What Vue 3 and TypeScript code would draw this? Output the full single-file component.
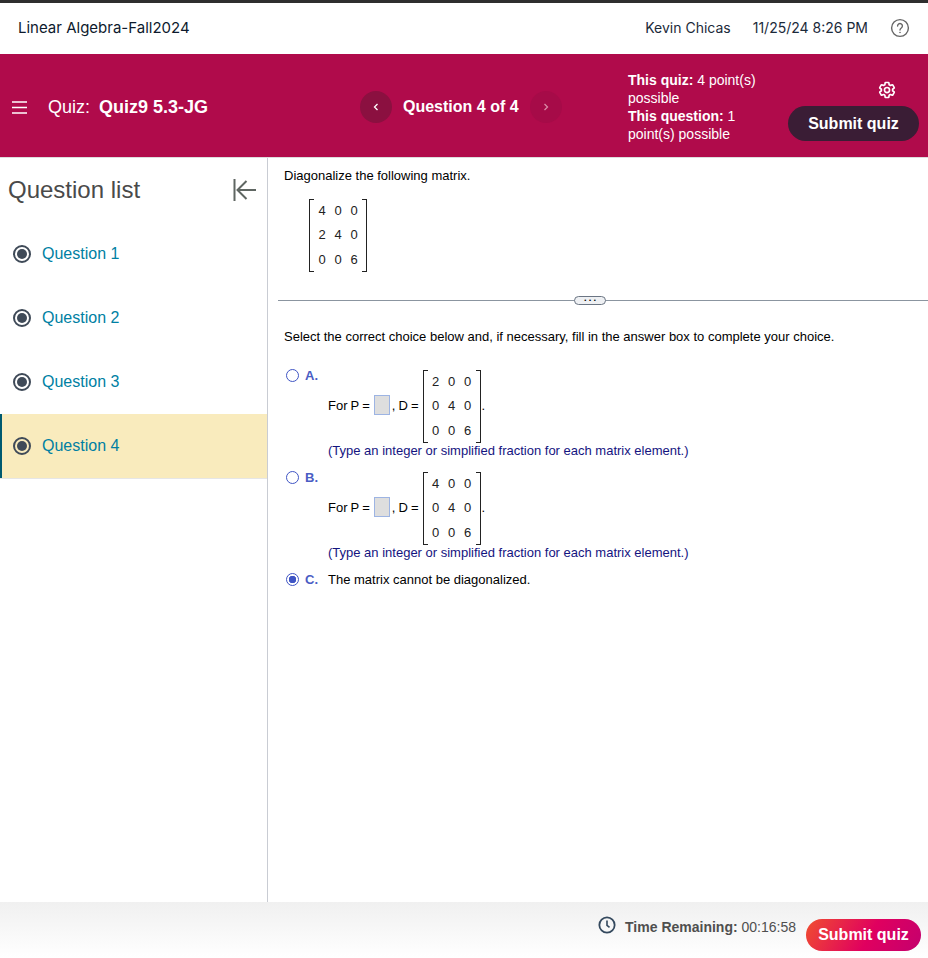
<script setup lang="ts">
interface Choice {
  letter: string
  rows?: number[][]
  text?: string
  selected?: boolean
}

const questions = ['Question 1', 'Question 2', 'Question 3', 'Question 4']
const stem = [[4, 0, 0], [2, 4, 0], [0, 0, 6]]
const note = '(Type an integer or simplified fraction for each matrix element.)'
const choices: Choice[] = [
  { letter: 'A.', rows: [[2, 0, 0], [0, 4, 0], [0, 0, 6]] },
  { letter: 'B.', rows: [[4, 0, 0], [0, 4, 0], [0, 0, 6]] },
  { letter: 'C.', text: 'The matrix cannot be diagonalized.', selected: true }
]
</script>

<template>
  <div class="page">
    <header class="topbar">
      <span class="course">Linear Algebra-Fall2024</span>
      <span class="user">Kevin Chicas</span>
      <span class="clock">11/25/24 8:26 PM</span>
      <svg class="help" width="20" height="20" viewBox="0 0 20 20" fill="none" stroke="#666" stroke-width="1.4">
        <circle cx="10" cy="10" r="8.4" />
        <path d="M7.6 8a2.4 2.4 0 1 1 3.7 2c-.9.6-1.3 1-1.3 2" stroke-linecap="round" />
        <circle cx="10" cy="14.4" r=".5" fill="#666" stroke-width=".6" />
      </svg>
    </header>

    <section class="quizbar">
      <svg class="menu" width="16" height="13" viewBox="0 0 16 13" stroke="#fff" stroke-width="1.5">
        <path d="M0 1h15M0 6.5h15M0 12h15" />
      </svg>
      <div class="quiz-title"><span>Quiz:</span><b>Quiz9 5.3-JG</b></div>
      <div class="pager">
        <button class="round prev">
          <svg width="6" height="8" viewBox="0 0 6 8" fill="none" stroke="#fff" stroke-width="1.3"><path d="M4.5 1 1.5 4l3 3" /></svg>
        </button>
        <b>Question 4 of 4</b>
        <button class="round next">
          <svg width="6" height="8" viewBox="0 0 6 8" fill="none" stroke="#d98aa5" stroke-width="1.3"><path d="M1.5 1l3 3-3 3" /></svg>
        </button>
      </div>
      <div class="points">
        <div><b>This quiz:</b> 4 point(s) possible</div>
        <div><b>This question:</b> 1 point(s) possible</div>
      </div>
      <div class="actions">
        <svg class="gear" width="18" height="18" viewBox="0 0 24 24" fill="none" stroke="#fff" stroke-width="2.2" stroke-linejoin="round">
          <circle cx="12" cy="12" r="3.4" />
          <path d="M19.43 12.98c.04-.32.07-.64.07-.98 0-.34-.03-.66-.07-.98l2.11-1.65c.19-.15.24-.42.12-.64l-2-3.46c-.09-.16-.26-.25-.44-.25-.06 0-.12.01-.17.03l-2.49 1c-.52-.4-1.08-.73-1.69-.98l-.38-2.65C14.46 2.18 14.25 2 14 2h-4c-.25 0-.46.18-.49.42l-.38 2.65c-.61.25-1.17.59-1.69.98l-2.49-1c-.06-.02-.12-.03-.18-.03-.17 0-.34.09-.43.25l-2 3.46c-.13.22-.07.49.12.64l2.11 1.65c-.04.32-.07.65-.07.98 0 .33.03.66.07.98l-2.11 1.65c-.19.15-.24.42-.12.64l2 3.46c.09.16.26.25.44.25.06 0 .12-.01.17-.03l2.49-1c.52.4 1.08.73 1.69.98l.38 2.65c.03.24.24.42.49.42h4c.25 0 .46-.18.49-.42l.38-2.65c.61-.25 1.17-.59 1.69-.98l2.49 1c.06.02.12.03.18.03.17 0 .34-.09.43-.25l2-3.46c.12-.22.07-.49-.12-.64l-2.11-1.65z" />
        </svg>
        <button class="submit-dark">Submit quiz</button>
      </div>
    </section>

    <main class="body">
      <aside class="sidebar">
        <div class="side-head">
          <h2>Question list</h2>
          <svg width="24" height="22" viewBox="0 0 24 22" fill="none" stroke="#5f6662" stroke-width="2">
            <path d="M1.5 0v22M23 11H4.5M13.5 2l-9 9 9 9" />
          </svg>
        </div>
        <div
          v-for="(q, i) in questions"
          :key="q"
          class="q-row"
          :class="{ 'q-row--active': i === 3 }"
        >
          <span class="q-dot"><i></i></span>
          <span class="q-label">{{ q }}</span>
        </div>
      </aside>

      <div class="content">
        <p class="stem">Diagonalize the following matrix.</p>
        <div class="stem-matrix matrix">
          <template v-for="(row, r) in stem" :key="r">
            <span v-for="(n, c) in row" :key="c">{{ n }}</span>
          </template>
        </div>

        <div class="divider">
          <span class="dots">• • •</span>
        </div>

        <p class="prompt">Select the correct choice below and, if necessary, fill in the answer box to complete your choice.</p>

        <div class="choices">
          <div v-for="ch in choices" :key="ch.letter" class="choice">
            <span class="radio" :class="{ 'radio--on': ch.selected }"></span>
            <span class="letter">{{ ch.letter }}</span>
            <span v-if="ch.text" class="choice-text">{{ ch.text }}</span>
            <div v-else class="choice-body">
              <div class="equation">
                <span class="eq-part">For P =</span>
                <span class="answer-box eq-part"></span>
                <span class="comma eq-part">, D =</span>
                <div class="matrix">
                  <template v-for="(row, r) in ch.rows" :key="r">
                    <span v-for="(n, c) in row" :key="c">{{ n }}</span>
                  </template>
                </div>
                <span class="period eq-part">.</span>
              </div>
              <div class="note">{{ note }}</div>
            </div>
          </div>
        </div>
      </div>
    </main>

    <footer class="footer">
      <svg class="timer" width="18" height="18" viewBox="0 0 20 20" fill="none" stroke="#34495e" stroke-width="2">
        <circle cx="10" cy="10" r="8.5" />
        <path d="M10 5V10.5l2.8 2.2" stroke-width="1.8" />
      </svg>
      <span class="time"><b>Time Remaining:</b> 00:16:58</span>
      <button class="submit-bright">Submit quiz</button>
    </footer>
  </div>
</template>

<style>
html, body {
  margin: 0;
  background: #fff;
}
</style>

<style scoped>
.page {
  display: flex;
  flex-direction: column;
  height: 958px;
  overflow: hidden;
  font-family: "Liberation Sans", Arial, sans-serif;
  color: #111;
}
button {
  border: 0;
  padding: 0;
  font-family: inherit;
}

.topbar {
  flex: none;
  display: flex;
  align-items: center;
  box-sizing: border-box;
  height: 54px;
  padding: 0 18px 2px 18px;
  border-top: 3px solid #2e2e2e;
  font-family: Inter, sans-serif;
  font-size: 14px;
  color: #1b2a3a;
}
.course {
  flex: 1;
  font-size: 15px;
  color: #0d1a2d;
}
.user {
  margin-right: 22px;
}
.clock {
  margin-right: 22px;
}

.quizbar {
  flex: none;
  display: flex;
  align-items: center;
  box-sizing: border-box;
  height: 104px;
  padding: 3px 9px 0 12px;
  background: #b00b4b;
  color: #fff;
  border-bottom: 1px solid #ddd;
}
.quiz-title {
  display: flex;
  align-items: baseline;
  gap: 9px;
  width: 312px;
  margin-left: 20px;
  font-size: 18px;
}
.pager {
  display: flex;
  align-items: center;
  gap: 11px;
  width: 268px;
  font-size: 16px;
}
.round {
  display: flex;
  align-items: center;
  justify-content: center;
  width: 32px;
  height: 32px;
  border-radius: 50%;
}
.prev {
  background: #8b1040;
}
.next {
  background: #a60b48;
}
.points {
  width: 135px;
  font-size: 14px;
  line-height: 18px;
}
.actions {
  flex: 1;
  display: flex;
  flex-direction: column;
  align-items: flex-end;
  gap: 7px;
  margin-top: 8px;
}
.gear {
  margin-right: 23px;
}
.submit-dark {
  width: 131px;
  height: 35px;
  border-radius: 18px;
  background: #3a1d35;
  color: #fff;
  font-size: 16px;
  font-weight: 700;
}

.body {
  flex: 1;
  display: flex;
  min-height: 0;
}
.sidebar {
  flex: none;
  width: 267px;
  border-right: 1px solid #c9ccd3;
}
.side-head {
  display: flex;
  align-items: center;
  justify-content: space-between;
  height: 64px;
  padding: 0 10px 0 8px;
}
.side-head h2 {
  margin: 0;
  font-size: 24px;
  font-weight: 400;
  color: #4a4a4a;
}
.q-row {
  display: flex;
  align-items: center;
  gap: 11px;
  height: 64px;
  padding-left: 13px;
  font-size: 16px;
  color: #007fa3;
}
.q-row--active {
  padding-left: 11px;
  background: #f9ebbd;
  border-left: 2px solid #005a70;
  box-shadow: 0 1px 0 #e6e6e6;
}
.q-dot {
  display: flex;
  align-items: center;
  justify-content: center;
  box-sizing: border-box;
  width: 18px;
  height: 18px;
  border: 2px solid #3f4a58;
  border-radius: 50%;
}
.q-dot i {
  width: 10px;
  height: 10px;
  border-radius: 50%;
  background: #3f4a58;
}

.content {
  flex: 1;
  min-width: 0;
  padding: 9px 0 0 10px;
  font-size: 13px;
  color: #000;
}
.stem {
  margin: 0 0 0 6px;
  line-height: 17px;
}
.matrix {
  position: relative;
  flex: none;
  display: grid;
  grid-template-columns: repeat(3, 16px);
  grid-auto-rows: 22px;
  row-gap: 2.5px;
  align-items: center;
  justify-items: center;
  width: 48px;
  padding: 0 5px 2px;
  font-size: 13px;
  color: #222;
}
.matrix::before,
.matrix::after {
  content: "";
  position: absolute;
  top: 0;
  bottom: 0;
  width: 4px;
  border: 1px solid #222;
}
.matrix::before {
  left: 0;
  border-right: 0;
}
.matrix::after {
  right: 0;
  border-left: 0;
}
.stem-matrix {
  margin: 15px 0 0 31px;
}
.divider {
  position: relative;
  height: 1px;
  margin: 28px 0 0;
  background: #8b95a0;
  width: 650px;
}
.dots {
  position: absolute;
  top: -4px;
  left: 296px;
  box-sizing: border-box;
  width: 32px;
  height: 9px;
  border: 1px solid #6b7583;
  border-radius: 5px;
  background: #eef0f3;
  font-size: 6px;
  word-spacing: 1px;
  line-height: 7px;
  text-align: center;
}
.prompt {
  margin: 27px 0 0 6px;
  line-height: 17px;
}
.choices {
  margin: 22px 0 0 8px;
}
.choice {
  display: grid;
  grid-template-columns: 19px 23px 1fr;
  align-items: start;
  margin-bottom: 11px;
}
.radio {
  box-sizing: border-box;
  width: 13px;
  height: 13px;
  margin-top: 2px;
  border: 1.5px solid #3f55c4;
  border-radius: 50%;
  background: #fff;
}
.radio--on {
  background: radial-gradient(circle, #3f55c4 0 3.5px, #fff 4px);
}
.letter {
  line-height: 17px;
  font-size: 13px;
  font-weight: 700;
  color: #4a5dc4;
}
.choice-text {
  line-height: 17px;
}
.choice-body {
  margin-top: 3px;
}
.equation {
  display: flex;
  align-items: center;
  word-spacing: -0.5px;
}
.eq-part {
  margin-bottom: 3px;
}
.answer-box {
  box-sizing: border-box;
  width: 16px;
  height: 20px;
  margin-left: 4px;
  margin-right: 2px;
  background: #dedede;
  border: 1px solid #9db4e3;
}
.comma {
  margin-right: 4px;
}
.period {
  margin-left: 1px;
}
.note {
  line-height: 15px;
  color: #14147f;
}

.footer {
  flex: none;
  display: flex;
  align-items: flex-start;
  justify-content: flex-end;
  height: 56px;
  padding-right: 7px;
  background: linear-gradient(#f0f0f0, #fff);
}
.timer {
  margin: 14px 9px 0 0;
}
.time {
  margin: 17px 10px 0 0;
  font-size: 14px;
  line-height: 16px;
  color: #4f4f4f;
}
.submit-bright {
  width: 115px;
  height: 32px;
  margin-top: 17px;
  border-radius: 16px;
  background: linear-gradient(120deg, #f04e30, #e0005f 55%, #c4006e);
  color: #fff;
  font-size: 16px;
  font-weight: 700;
}
</style>
